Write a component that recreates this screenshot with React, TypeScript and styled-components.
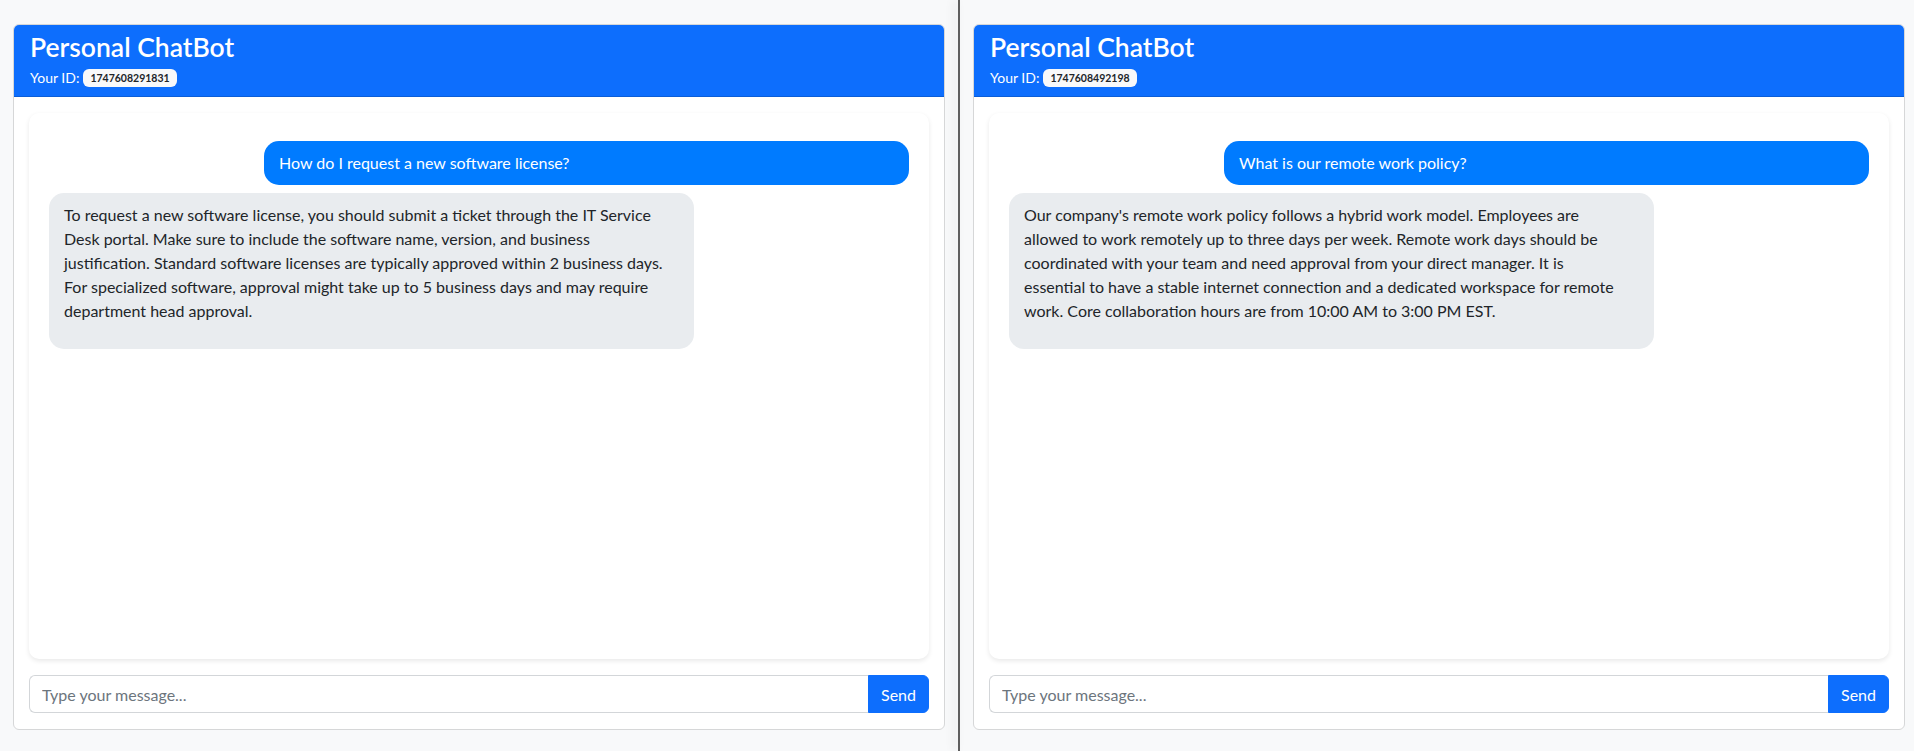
import React from "react";
import styled, { createGlobalStyle } from "styled-components";

const GlobalStyle = createGlobalStyle`
  html, body {
    margin: 0;
    padding: 0;
    background: #f8f9fa;
    font-family: Lato, "Noto Sans", sans-serif;
    color: #212529;
  }
  * { box-sizing: border-box; }
`;

const Screen = styled.div`
  display: grid;
  grid-template-columns: 958px 2px 954px;
  height: 751px;
  overflow: hidden;
`;

const Window = styled.div`
  background: #f8f9fa;
  padding: 24px 0 0 13px;
`;

const Divider = styled.div`
  background: #5e5e5e;
  box-shadow: -4px 0 9px rgba(0, 0, 0, 0.13);
  position: relative;
  z-index: 1;
`;

const Card = styled.div`
  width: 932px;
  height: 706px;
  background: #fff;
  border: 1px solid #d6d7d8;
  border-radius: 6px;
  overflow: hidden;
  display: flex;
  flex-direction: column;
`;

const Header = styled.div`
  background: #0d6efd;
  color: #fff;
  padding: 5px 16px 8px;
  border-bottom: 1px solid #0b5ed7;
  height: 72px;
`;

const Title = styled.h3`
  margin: 0;
  font-size: 26.5px;
  font-weight: 600;
  line-height: 34px;
`;

const IdLine = styled.div`
  display: flex;
  align-items: center;
  gap: 4px;
  font-size: 14px;
  line-height: 21px;
  margin-top: 3px;
`;

const Badge = styled.span`
  background: #f8f9fa;
  color: #212529;
  font-size: 10.5px;
  font-weight: 700;
  line-height: 10px;
  padding: 4px 7px;
  border-radius: 6px;
`;

const Body = styled.div`
  flex: 1;
  padding: 16px 15px;
  display: flex;
  flex-direction: column;
`;

const ChatBox = styled.div`
  flex: 1;
  background: #fff;
  border-radius: 10px;
  box-shadow: 0 2px 5px rgba(0, 0, 0, 0.09);
  padding: 28px 20px 20px;
  display: flex;
  flex-direction: column;
  gap: 8px;
`;

const Bubble = styled.div<{ $from: "user" | "bot" }>`
  width: 75%;
  align-self: ${(p) => (p.$from === "user" ? "flex-end" : "flex-start")};
  background: ${(p) => (p.$from === "user" ? "#007bff" : "#e9ecef")};
  color: ${(p) => (p.$from === "user" ? "#fff" : "#212529")};
  border-radius: 15px;
  padding: 10px 15px;
  font-size: 16px;
  line-height: 24px;
`;

const Para = styled.p`
  margin: 0 0 16px;
`;

const InputGroup = styled.div`
  display: flex;
  margin-top: 16px;
  height: 38px;
`;

const Input = styled.input`
  flex: 1;
  border: 1px solid #d3d6d9;
  border-right: none;
  border-radius: 6px 0 0 6px;
  padding: 6px 12px;
  font-size: 16px;
  font-family: inherit;
  color: #212529;
  outline: none;
  &::placeholder {
    color: #6c757d;
  }
`;

const SendButton = styled.button`
  width: 61px;
  border: 1px solid #0d6efd;
  background: #0d6efd;
  color: #fff;
  font-size: 16px;
  font-family: inherit;
  border-radius: 0 6px 6px 0;
  padding: 6px 12px;
`;

type Chat = { id: string; question: string; answer: string[] };

const chats: Chat[] = [
  {
    id: "1747608291831",
    question: "How do I request a new software license?",
    answer: [
      "To request a new software license, you should submit a ticket through the IT Service",
      "Desk portal. Make sure to include the software name, version, and business",
      "justification. Standard software licenses are typically approved within 2 business days.",
      "For specialized software, approval might take up to 5 business days and may require",
      "department head approval.",
    ],
  },
  {
    id: "1747608492198",
    question: "What is our remote work policy?",
    answer: [
      "Our company's remote work policy follows a hybrid work model. Employees are",
      "allowed to work remotely up to three days per week. Remote work days should be",
      "coordinated with your team and need approval from your direct manager. It is",
      "essential to have a stable internet connection and a dedicated workspace for remote",
      "work. Core collaboration hours are from 10:00 AM to 3:00 PM EST.",
    ],
  },
];

const ChatWindow: React.FC<{ chat: Chat }> = ({ chat }) => (
  <Window>
    <Card>
      <Header>
        <Title>Personal ChatBot</Title>
        <IdLine>
          Your ID: <Badge>{chat.id}</Badge>
        </IdLine>
      </Header>
      <Body>
        <ChatBox>
          <Bubble $from="user">{chat.question}</Bubble>
          <Bubble $from="bot">
            <Para>
              {chat.answer.map((line, i) => (
                <React.Fragment key={i}>
                  {line}
                  {i < chat.answer.length - 1 && <br />}
                </React.Fragment>
              ))}
            </Para>
          </Bubble>
        </ChatBox>
        <InputGroup>
          <Input placeholder="Type your message..." />
          <SendButton>Send</SendButton>
        </InputGroup>
      </Body>
    </Card>
  </Window>
);

export default function App() {
  return (
    <>
      <GlobalStyle />
      <Screen>
        <ChatWindow chat={chats[0]} />
        <Divider />
        <ChatWindow chat={chats[1]} />
      </Screen>
    </>
  );
}
